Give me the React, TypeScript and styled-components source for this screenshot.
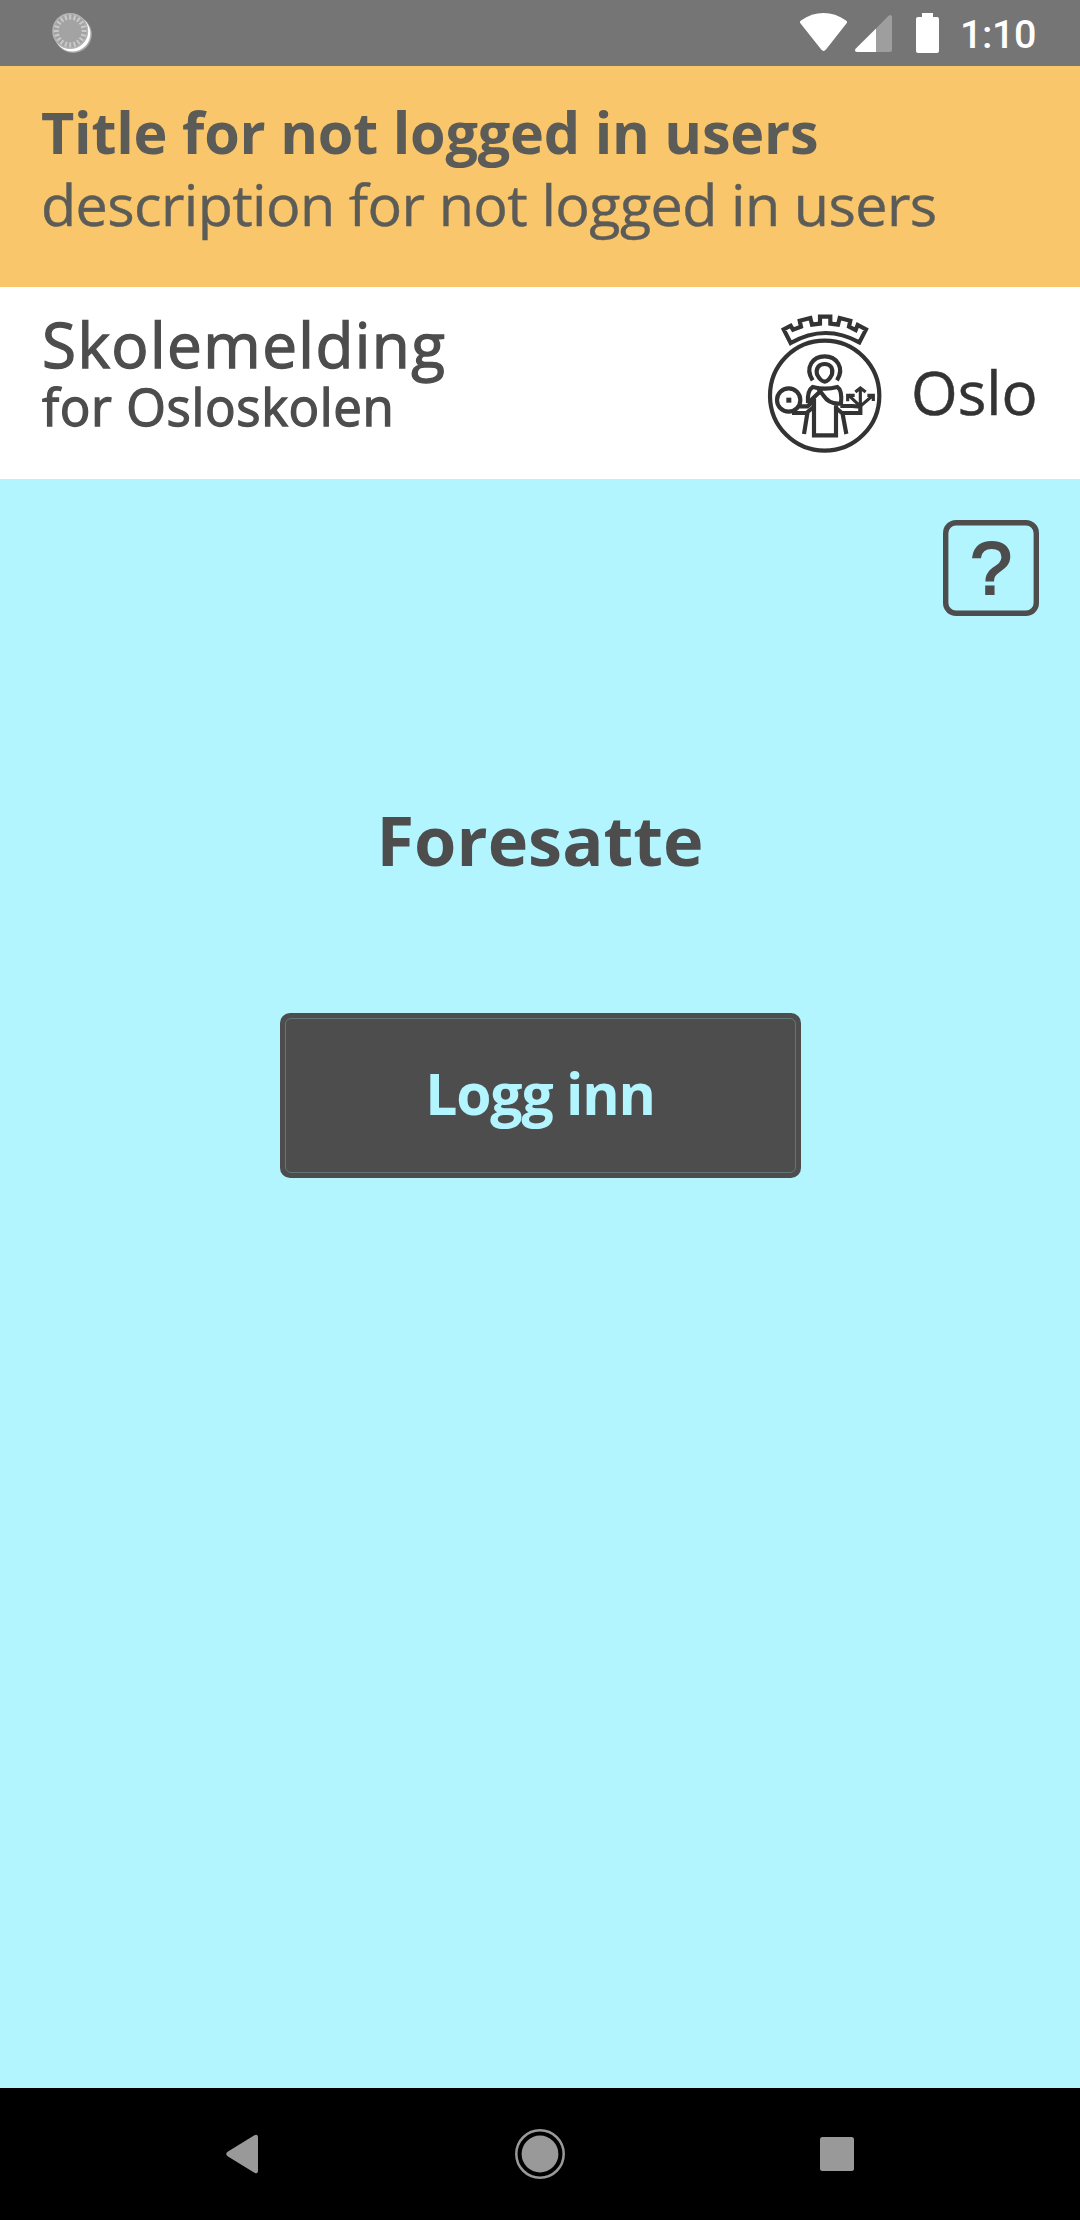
import React from "react";
import styled, { createGlobalStyle } from "styled-components";

const colors = {
  status: "#757575",
  banner: "#f9c66b",
  bannerText: "#5b5b58",
  cyan: "#b3f5ff",
  ink: "#4d4d4d",
  logo: "#333333",
  nav: "#999999",
};

const GlobalStyle = createGlobalStyle`
  html, body { margin: 0; padding: 0; }
  body { background: ${colors.cyan}; font-family: "Open Sans", "Noto Sans", sans-serif; }
  *, *::before, *::after { box-sizing: border-box; }
`;

const Screen = styled.div`
  width: 1080px;
  height: 2220px;
  display: flex;
  flex-direction: column;
  overflow: hidden;
  background: ${colors.cyan};
`;

const StatusBar = styled.div`
  flex: none;
  height: 66px;
  padding: 0 44px 0 50px;
  display: flex;
  align-items: flex-start;
  justify-content: space-between;
  background: ${colors.status};
  svg { display: block; }
`;

const StatusIcons = styled.div`
  display: flex;
  align-items: flex-start;
`;

const Clock = styled.span`
  width: 76px;
  margin-left: 20px;
  padding-top: 11px;
  font: 500 39.5px/47px Roboto, sans-serif;
  letter-spacing: -0.4px;
  color: #fff;
  white-space: nowrap;
`;

const Banner = styled.section`
  flex: none;
  height: 221px;
  padding: 30px 41px 0;
  background: ${colors.banner};
`;

const Line = styled.p<{
  $size: number;
  $line: number;
  $weight: number;
  $track?: number;
  $stroke?: number;
  $color?: string;
}>`
  margin: 0;
  font-size: ${(p) => p.$size}px;
  line-height: ${(p) => p.$line}px;
  font-weight: ${(p) => p.$weight};
  letter-spacing: ${(p) => p.$track ?? 0}px;
  color: ${(p) => p.$color ?? colors.ink};
  -webkit-text-stroke: ${(p) => p.$stroke ?? 0}px currentColor;
  white-space: nowrap;
`;

const Header = styled.header`
  flex: none;
  height: 192px;
  padding: 25px 44px 0 41px;
  display: flex;
  align-items: flex-start;
  justify-content: space-between;
  background: #fff;
`;

const Titles = styled.div`
  padding: 1px 0 0 1px;
`;

const Logo = styled.div`
  width: 270px;
  display: flex;
  align-items: flex-start;
  svg { display: block; flex: none; }
`;

const LogoName = styled.span`
  margin: 35px 0 0 27px;
  font-size: 60px;
  line-height: 90px;
  color: ${colors.logo};
  -webkit-text-stroke: 0.5px currentColor;
`;

const Main = styled.main`
  flex: 1;
  display: flex;
  flex-direction: column;
  align-items: center;
  padding-top: 41px;
`;

const HelpButton = styled.button`
  align-self: flex-end;
  width: 96px;
  height: 96px;
  margin-right: 41px;
  padding: 0;
  border: 0;
  border-radius: 13px;
  box-shadow: inset 0 0 0 5.4px ${colors.ink};
  background: transparent;
  color: ${colors.ink};
  font: 400 75px/96px "Liberation Sans", Arial, sans-serif;
  -webkit-text-stroke: 2.2px currentColor;
`;

const Heading = styled.h1`
  margin: 182px 0 0;
  font-size: 68.5px;
  line-height: 84px;
  font-weight: 700;
  color: ${colors.ink};
`;

const LoginButton = styled.button`
  width: 521px;
  height: 165px;
  margin-top: 131px;
  padding: 5px;
  border: 0;
  border-radius: 10px;
  background: ${colors.ink};
  color: ${colors.cyan};
  font: 700 57px/72px "Open Sans", "Noto Sans", sans-serif;
  letter-spacing: -1.2px;
`;

const LoginInner = styled.span`
  display: flex;
  align-items: center;
  justify-content: center;
  height: 155px;
  padding-bottom: 5px;
  border: 1px solid #627678;
  border-radius: 6px;
`;

const NavBar = styled.nav`
  flex: none;
  height: 132px;
  display: flex;
  align-items: center;
  justify-content: center;
  gap: 255px;
  background: #000;
  svg { display: block; }
`;

const ticks = Array.from({ length: 20 }, (_, i) => i * 18);

const SyncIcon = () => (
  <svg width="44" height="60" viewBox="50 0 44 60">
    <circle cx="73.200" cy="34.400" r="18.600" fill="#a8a8a8" />
    <circle cx="72.400" cy="33.600" r="18" fill="#fff" />
    <circle cx="70.200" cy="31" r="18" fill="#b4b4b4" />
    <circle cx="70.200" cy="31" r="16.600" fill="#a3a3a3" />
    {ticks.map((a) => (
      <path key={a} d="M70.200 14.600v5" stroke="#c9c9c9" strokeWidth="2" transform={`rotate(${a} 70.200 31)`} />
    ))}
  </svg>
);

const StatusGlyphs = () => (
  <svg width="142" height="60" viewBox="798 0 142 60" fill="#fff">
    <path d="M800.6 23.6Q799 21.8 801 20.4C815 10.6 832 10.6 846 20.4Q848 21.8 846.4 23.6L826 49.6Q823.6 52.4 821.2 49.6Z" />
    <path d="M892 52V17Q891.4 13.8 888.6 15.8L876 28.4V52H890Q892 52 892 50Z" opacity=".3" />
    <path d="M876 28.4V52H857Q853.8 51.6 855.6 48.8Z" />
    <path d="M922 13h11v4h4q2 0 2 2v32q0 2-2 2h-19q-2 0-2-2V19q0-2 2-2h4z" />
  </svg>
);

const Emblem = () => (
  <svg
    width="118" height="142" viewBox="48 36 354 426"
    fill="none" stroke={colors.logo} strokeWidth="12.5" strokeLinejoin="miter"
  >
    <path d="M122 129 101 88 122 77 129 89 153 80 149 62 181 54 186 74 210 71V50H241V71L264 74 269 54 301 62 297 80 317 90 323 75 348 88 328 127Q225 70 122 129Z" />
    <ellipse cx="224" cy="287" rx="164" ry="165" />
    <path d="M188 241C163 202 189 169 224 169S285 202 261 241" />
    <path d="M201 223C197 205 206 192 224 192S250 205 246 223Q236 244 224 245Q211 243 201 223Z" />
    <circle cx="116" cy="300" r="35" />
    <rect x="109" y="293" width="15" height="15" fill={colors.logo} stroke="none" />
    <path d="M174 309Q171 272 188 261Q225 271 262 261Q277 270 273 310Q239 315 220 286L201 261" />
    <path d="M174 309 208 277M192 296V406H258V316" />
    <path d="M148 319H172L193 302M126 339H169L191 321M173 334 162 402" />
    <path d="M271 318H307L331 320V339H276L260 326M277 337 289 402" />
    <path d="M331 332V268M316 276 331 264 347 276M334 316 370 285M352 286H370V303M328 316 294 284M293 304V286H314" strokeWidth="9.5" />
  </svg>
);

const BackIcon = () => (
  <svg width="34" height="42" viewBox="226 2133 34 42">
    <path d="M258 2138v32q0 5-4 2.400l-26-16q-3.600-2.400 0-4.800l26-16q4-2.400 4 2.400z" fill={colors.nav} />
  </svg>
);

const HomeIcon = () => (
  <svg width="50" height="50" viewBox="0 0 50 50">
    <circle cx="25" cy="25" r="23.700" fill="none" stroke={colors.nav} strokeWidth="2.500" />
    <circle cx="25" cy="25" r="18.400" fill={colors.nav} />
  </svg>
);

const RecentIcon = () => (
  <svg width="34" height="34" viewBox="0 0 34 34">
    <rect width="34" height="34" rx="2.500" fill={colors.nav} />
  </svg>
);

export default function App() {
  return (
    <>
      <GlobalStyle />
      <Screen>
        <StatusBar>
          <SyncIcon />
          <StatusIcons>
            <StatusGlyphs />
            <Clock>1:10</Clock>
          </StatusIcons>
        </StatusBar>
        <Banner>
          <Line $size={57.5} $line={72} $weight={700} $track={-0.2} $color={colors.bannerText}>
            Title for not logged in users
          </Line>
          <Line $size={57.5} $line={72} $weight={400} $track={-0.63} $stroke={0.4} $color={colors.bannerText}>
            description for not logged in users
          </Line>
        </Banner>
        <Header>
          <Titles>
            <Line $size={62} $line={62} $weight={400} $track={1.4} $stroke={1.3}>Skolemelding</Line>
            <Line $size={51} $line={62} $weight={400} $track={0.6} $stroke={1.3}>for Osloskolen</Line>
          </Titles>
          <Logo>
            <Emblem />
            <LogoName>Oslo</LogoName>
          </Logo>
        </Header>
        <Main>
          <HelpButton aria-label="Hjelp">?</HelpButton>
          <Heading>Foresatte</Heading>
          <LoginButton>
            <LoginInner>Logg inn</LoginInner>
          </LoginButton>
        </Main>
        <NavBar>
          <BackIcon />
          <HomeIcon />
          <RecentIcon />
        </NavBar>
      </Screen>
    </>
  );
}
